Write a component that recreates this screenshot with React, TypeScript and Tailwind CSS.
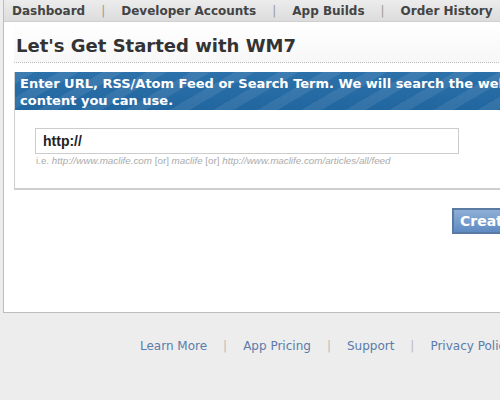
/** WM7 — "Let's Get Started" page: nav bar, URL entry box, Create button, footer links. */

const NAV = ['Dashboard', 'Developer Accounts', 'App Builds', 'Order History']
const FOOTER = ['Learn More', 'App Pricing', 'Support', 'Privacy Policy']

function Sep({ className }: { className: string }) {
  return <span className={`px-[16px] ${className}`}>|</span>
}

export default function App() {
  return (
    <div className="w-[500px] h-[400px] overflow-hidden bg-[#ededed] font-['DejaVu_Sans',sans-serif]">
      {/* Main white panel */}
      <div className="ml-[3px] w-[620px] h-[313px] bg-white border-l border-b border-[#bdbdbd]">
        {/* Top nav */}
        <nav className="h-[22px] flex items-center pl-[8px] text-[12px] font-bold text-[#444] whitespace-nowrap bg-[linear-gradient(#ececec,#dcdcdc)] border-b border-[#d0d0d0]">
          {NAV.map((item, i) => (
            <span key={item} className="flex items-center">
              {i > 0 && <Sep className="font-normal text-[#999]" />}
              <span>{item}</span>
            </span>
          ))}
        </nav>

        <div className="pl-[10px]">
          {/* Title */}
          <h1 className="h-[41px] pt-[12px] pl-[2px] text-[18px] leading-[24px] font-bold text-[#333] border-b border-dotted border-[#bbb] bg-[linear-gradient(#fff,#f7f7f7)]">
            Let's Get Started with WM7
          </h1>

          {/* Entry box */}
          <div className="mt-[9px] border-l border-b-2 border-[#cfcfcf]">
            <div className="h-[38px] pl-[5px] pt-[3px] text-[13px] leading-[17px] font-bold text-white whitespace-nowrap bg-[repeating-linear-gradient(150deg,rgba(255,255,255,0.08)_0_10px,transparent_10px_22px),linear-gradient(#2d71aa,#2266a0)]">
              <div>Enter URL, RSS/Atom Feed or Search Term. We will search the web for</div>
              <div>content you can use.</div>
            </div>
            <div className="pl-[20px] pt-[18px] pb-[21px]">
              <div className="w-[424px] h-[26px] border border-[#cccccc] flex items-center pl-[7px] text-[14px] font-bold text-[#222] font-['Liberation_Sans',sans-serif]">
                http://
              </div>
              <div className="mt-[1px] pl-[1px] text-[9.8px] leading-[12px] text-[#aaa] whitespace-nowrap font-['Liberation_Sans',sans-serif]">
                i.e. <i>http://www.maclife.com</i> [or] <i>maclife</i> [or]{' '}
                <i>http://www.maclife.com/articles/all/feed</i>
              </div>
            </div>
          </div>

          {/* Create button */}
          <div className="mt-[18px] pl-[438px]">
            <button className="h-[26px] px-[6px] border-2 border-[#5a7aa3] bg-[linear-gradient(#8eafd6,#5f8bc2)] text-[14px] font-bold text-white">
              Create Application
            </button>
          </div>
        </div>
      </div>

      {/* Footer */}
      <footer className="mt-[24px] pl-[140px] flex items-center text-[12px] leading-[18px] text-[#5a7cab] whitespace-nowrap">
        {FOOTER.map((item, i) => (
          <span key={item} className="flex items-center">
            {i > 0 && <Sep className="text-[#bbb]" />}
            <span>{item}</span>
          </span>
        ))}
      </footer>
    </div>
  )
}
